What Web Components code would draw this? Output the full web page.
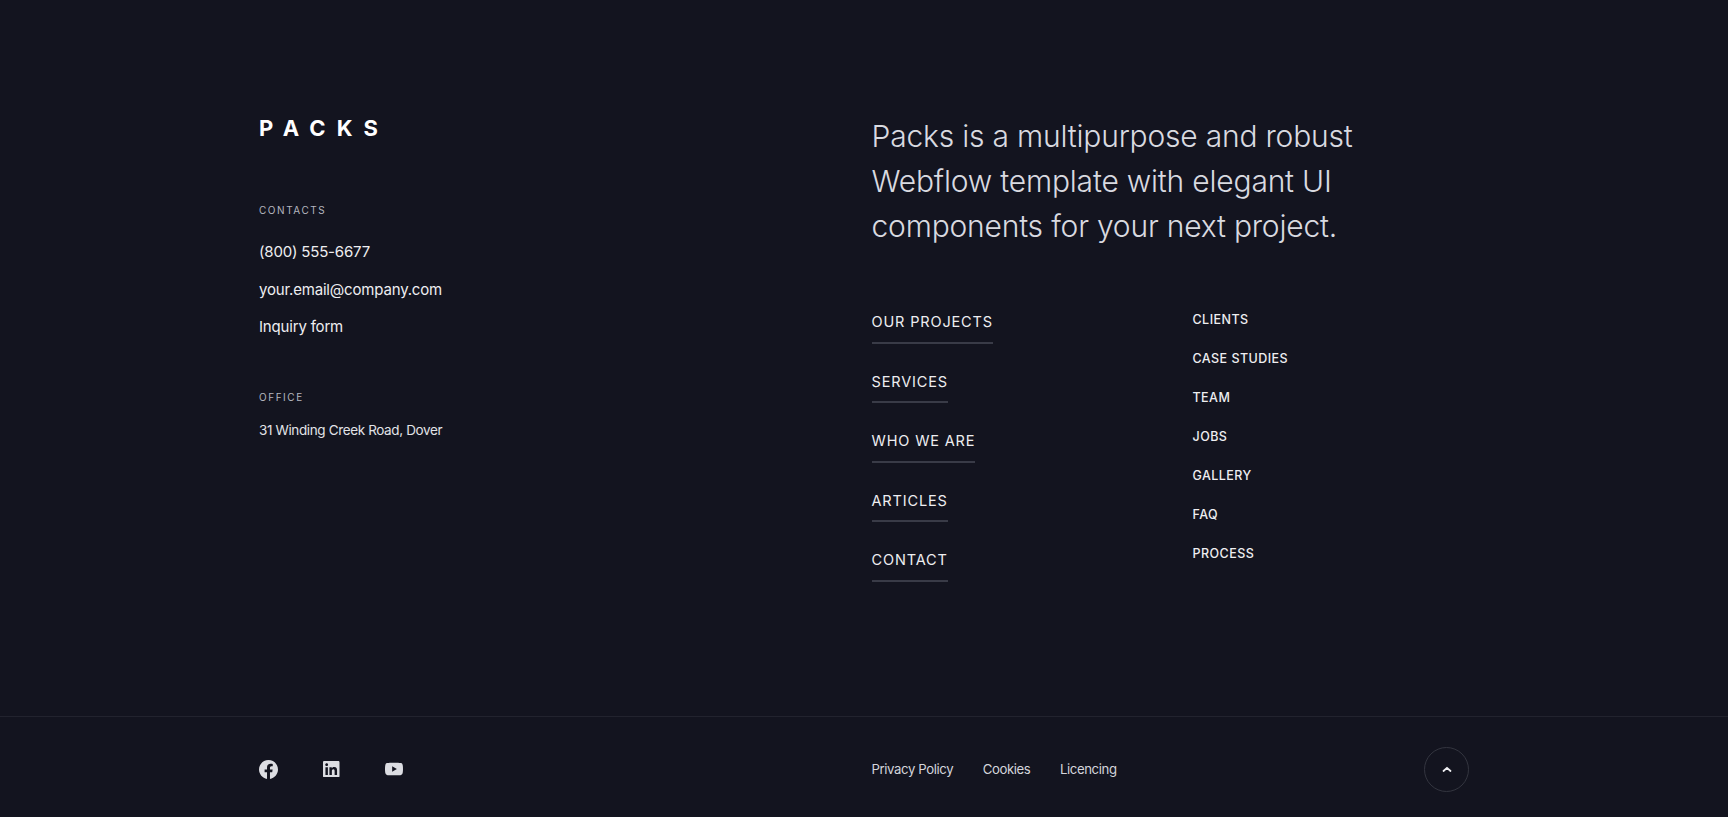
<!DOCTYPE html>
<html lang="en">
<head>
<meta charset="utf-8">
<title>Packs footer</title>
<style>
  html, body { margin: 0; background: #13141f; }
  body { font-family: "Inter", "Liberation Sans", sans-serif; color: #fff; }
</style>
</head>
<body>
<site-footer></site-footer>

<script>
class SiteFooter extends HTMLElement {
  constructor() {
    super();
    this.attachShadow({ mode: 'open' });
    this.shadowRoot.innerHTML = `
      <style>
        :host { display: block; height: 817px; background: #13141f; overflow: hidden; }
        .top { box-sizing: border-box; height: 716px; padding: 112px 0 0 259px;
               display: grid; grid-template-columns: 612.5px 1fr; }
        .bar { box-sizing: border-box; height: 101px; border-top: 1px solid #22232e; padding: 4px 0 0 259px;
               display: grid; grid-template-columns: 612.5px 552.5px 45px; align-items: center; }
      </style>
      <div class="top">
        <brand-column></brand-column>
        <intro-column></intro-column>
      </div>
      <div class="bar">
        <social-links></social-links>
        <legal-links></legal-links>
        <top-button></top-button>
      </div>
    `;
  }
}

class BrandColumn extends HTMLElement {
  constructor() {
    super();
    this.attachShadow({ mode: 'open' });
    this.shadowRoot.innerHTML = `
      <style>
        :host { display: block; }
        .logo { margin-top: 5px; font: 700 22px/22px "Inter", sans-serif; letter-spacing: 11.2px; color: #fff; }
        .label { font: 400 10px/12px "Inter", sans-serif; letter-spacing: 1.55px; color: #b5b7bf; }
        .contacts { margin-top: 65px; }
        .links { margin-top: 24px; display: grid; gap: 13.5px; }
        .links span { font: 400 15px/24px "Inter", sans-serif; color: #eeeef1; letter-spacing: -0.18px; }
        .office { margin-top: 52px; }
        .address { margin-top: 17px; font: 400 13.5px/20px "Inter", sans-serif; color: #e2e3e7; letter-spacing: -0.37px; }
      </style>
      <div class="logo">PACKS</div>
      <div class="contacts">
        <div class="label">CONTACTS</div>
        <div class="links">
          <span>(800) 555-6677</span>
          <span>your.email@company.com</span>
          <span>Inquiry form</span>
        </div>
      </div>
      <div class="office">
        <div class="label">OFFICE</div>
        <div class="address">31 Winding Creek Road, Dover</div>
      </div>
    `;
  }
}

class IntroColumn extends HTMLElement {
  constructor() {
    super();
    this.attachShadow({ mode: 'open' });
    this.shadowRoot.innerHTML = `
      <style>
        :host { display: block; }
        p { margin: 1.5px 0 0; font: 300 30px/45px "Inter", sans-serif; letter-spacing: -0.2px; color: #d9dae0; white-space: nowrap; }
        .nav { margin-top: 60.5px; display: grid; grid-template-columns: 321px 1fr; }
        .main { padding-top: 3px; display: flex; flex-direction: column; align-items: flex-start; gap: 28px; }
        .sub { padding-top: 1px; display: flex; flex-direction: column; align-items: flex-start; gap: 19px; }
      </style>
      <p>Packs is a multipurpose and robust<br>Webflow template with elegant UI<br>components for your next project.</p>
      <div class="nav">
        <div class="main">
          <main-link>OUR PROJECTS</main-link>
          <main-link>SERVICES</main-link>
          <main-link>WHO WE ARE</main-link>
          <main-link>ARTICLES</main-link>
          <main-link>CONTACT</main-link>
        </div>
        <div class="sub">
          <sub-link>CLIENTS</sub-link>
          <sub-link>CASE STUDIES</sub-link>
          <sub-link>TEAM</sub-link>
          <sub-link>JOBS</sub-link>
          <sub-link>GALLERY</sub-link>
          <sub-link>FAQ</sub-link>
          <sub-link>PROCESS</sub-link>
        </div>
      </div>
    `;
  }
}

class MainLink extends HTMLElement {
  constructor() {
    super();
    this.attachShadow({ mode: 'open' });
    this.shadowRoot.innerHTML = `
      <style>
        :host { display: block; padding-bottom: 9.5px; border-bottom: 2px solid #393b47;
                font: 400 14.5px/20px "Inter", sans-serif; letter-spacing: 0.85px; color: #eeeef1; }
      </style>
      <slot></slot>
    `;
  }
}

class SubLink extends HTMLElement {
  constructor() {
    super();
    this.attachShadow({ mode: 'open' });
    this.shadowRoot.innerHTML = `
      <style>
        :host { display: block; font: 500 12.5px/20px "Inter", sans-serif; letter-spacing: 0.45px; color: #eeeef1; }
      </style>
      <slot></slot>
    `;
  }
}

class SocialLinks extends HTMLElement {
  constructor() {
    super();
    this.attachShadow({ mode: 'open' });
    this.shadowRoot.innerHTML = `
      <style>
        :host { display: flex; align-items: center; gap: 45px; }
        svg { display: block; fill: #dcdde2; }
      </style>
      <svg width="19" height="19" viewBox="0 0 24 24"><path d="M24 12.073c0-6.627-5.373-12-12-12s-12 5.373-12 12c0 5.99 4.388 10.954 10.125 11.854v-8.385H7.078v-3.47h3.047V9.43c0-3.007 1.792-4.669 4.533-4.669 1.312 0 2.686.235 2.686.235v2.953H15.83c-1.491 0-1.956.925-1.956 1.874v2.25h3.328l-.532 3.47h-2.796v8.385C19.612 23.027 24 18.062 24 12.073z"/></svg>
      <svg width="16.5" height="16.5" viewBox="0 0 24 24"><path d="M20.447 20.452h-3.554v-5.569c0-1.328-.027-3.037-1.852-3.037-1.853 0-2.136 1.445-2.136 2.939v5.667H9.351V9h3.414v1.561h.046c.477-.9 1.637-1.85 3.37-1.85 3.601 0 4.267 2.37 4.267 5.455v6.286zM5.337 7.433c-1.144 0-2.063-.926-2.063-2.065 0-1.138.92-2.063 2.063-2.063 1.14 0 2.064.925 2.064 2.063 0 1.139-.925 2.065-2.064 2.065zm1.782 13.019H3.555V9h3.564v11.452zM22.225 0H1.771C.792 0 0 .774 0 1.729v20.542C0 23.227.792 24 1.771 24h20.451C23.2 24 24 23.227 24 22.271V1.729C24 .774 23.2 0 22.222 0h.003z"/></svg>
      <svg width="18" height="18" viewBox="0 0 24 24"><path d="M23.498 6.186a3.016 3.016 0 0 0-2.122-2.136C19.505 3.545 12 3.545 12 3.545s-7.505 0-9.377.505A3.017 3.017 0 0 0 .502 6.186C0 8.07 0 12 0 12s0 3.93.502 5.814a3.016 3.016 0 0 0 2.122 2.136c1.871.505 9.376.505 9.376.505s7.505 0 9.377-.505a3.015 3.015 0 0 0 2.122-2.136C24 15.93 24 12 24 12s0-3.93-.502-5.814zM9.545 15.568V8.432L15.818 12l-6.273 3.568z"/></svg>
    `;
  }
}

class LegalLinks extends HTMLElement {
  constructor() {
    super();
    this.attachShadow({ mode: 'open' });
    this.shadowRoot.innerHTML = `
      <style>
        :host { display: flex; gap: 29.5px; font: 400 13.2px/20px "Inter", sans-serif; letter-spacing: -0.4px; color: #d4d5db; }
      </style>
      <span>Privacy Policy</span>
      <span>Cookies</span>
      <span>Licencing</span>
    `;
  }
}

class TopButton extends HTMLElement {
  constructor() {
    super();
    this.attachShadow({ mode: 'open' });
    this.shadowRoot.innerHTML = `
      <style>
        :host { box-sizing: border-box; display: flex; width: 45px; height: 45px; align-items: center; justify-content: center;
                border: 1.5px solid #33353f; border-radius: 50%; }
        svg { display: block; fill: none; stroke: #eeeef1; stroke-width: 1.8; stroke-linecap: round; stroke-linejoin: round; }
      </style>
      <svg width="10" height="7" viewBox="0 0 10 7"><path d="M1.5 5 5 1.8 8.5 5"/></svg>
    `;
  }
}

customElements.define('site-footer', SiteFooter);
customElements.define('brand-column', BrandColumn);
customElements.define('intro-column', IntroColumn);
customElements.define('main-link', MainLink);
customElements.define('sub-link', SubLink);
customElements.define('social-links', SocialLinks);
customElements.define('legal-links', LegalLinks);
customElements.define('top-button', TopButton);
</script>
</body>
</html>
